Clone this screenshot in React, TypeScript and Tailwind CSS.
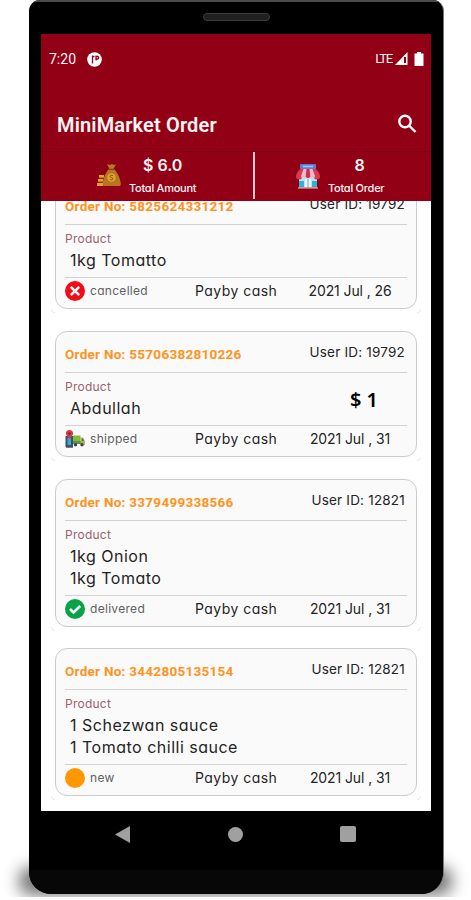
import type { ReactNode } from 'react';

type Status = 'cancelled' | 'shipped' | 'delivered' | 'new';

interface Order {
  orderNo: string;
  userId: string;
  products: string[];
  status: Status;
  date: string;
  price?: string;
}

const orders: Order[] = [
  { orderNo: '5825624331212', userId: '19792', products: ['1kg Tomatto'], status: 'cancelled', date: '2021 Jul , 26' },
  { orderNo: '55706382810226', userId: '19792', products: ['Abdullah'], status: 'shipped', date: '2021 Jul , 31', price: '$ 1' },
  { orderNo: '3379499338566', userId: '12821', products: ['1kg Onion', '1kg Tomato'], status: 'delivered', date: '2021 Jul , 31' },
  { orderNo: '3442805135154', userId: '12821', products: ['1 Schezwan sauce', '1 Tomato chilli sauce'], status: 'new', date: '2021 Jul , 31' },
];

function StatusIcon({ status }: { status: Status }) {
  if (status === 'shipped') {
    return (
      <svg className="w-5 h-5 shrink-0" viewBox="0 0 20 20">
        <rect x="0.5" y="7" width="7.5" height="11" fill="#35536d" />
        <rect x="2.5" y="9" width="3.5" height="7" fill="#43a5cf" />
        <path d="M1 18h7" stroke="#46505a" strokeWidth="1.5" />
        <path d="M4.5 1a3.6 3.6 0 0 1 3.6 3.6C8.1 7 4.5 10 4.5 10S.9 7 .9 4.6A3.6 3.6 0 0 1 4.5 1z" fill="#d93c45" />
        <circle cx="4.5" cy="4.5" r="1.2" fill="#5b3040" />
        <rect x="8" y="6.5" width="7.5" height="8.5" fill="#83b83f" />
        <path d="M8 12h8v3H8z" fill="#5c9345" />
        <path d="M15.5 8.5H18l1.8 3.5v4h-4.3z" fill="#a3b74b" />
        <path d="M17 9.5h1l1 2.5h-2z" fill="#496d83" />
        <path d="M17.5 13.5h2.3v2h-2.3z" fill="#e6a53b" />
        <circle cx="10.5" cy="15.7" r="1.7" fill="#3b4855" />
        <circle cx="17" cy="15.7" r="1.7" fill="#3b4855" />
      </svg>
    );
  }

  return (
    <svg className="w-5 h-5 shrink-0" viewBox="0 0 20 20" fill="none" stroke="#fff" strokeWidth="2.5">
      {status === 'cancelled' && (
        <>
          <circle cx="10" cy="10" r="10" fill="#f40b17" stroke="none" />
          <path d="M5.8 5.8l8.4 8.4M14.2 5.8l-8.4 8.4" />
        </>
      )}
      {status === 'delivered' && (
        <>
          <circle cx="10" cy="10" r="10" fill="#08a24b" stroke="none" />
          <path d="M5 10l3.5 3.5 6.7-6.5" />
        </>
      )}
      {status === 'new' && <circle cx="10" cy="10" r="10" fill="#ff9800" stroke="none" />}
    </svg>
  );
}

function MoneyBag() {
  return (
    <svg className="w-6 h-6" viewBox="0 0 24 24">
      <path d="M10 1l3 1 2-1 2 1 2-1-2.5 5h-4z" fill="#b9772b" />
      <path d="M12 6h5c3 3 6.5 9 6.8 15 .1 1.5-.8 2-2 2H7.5c-1.5 0-2-.8-1.8-2C6 15 9 9 12 6z" fill="#b87521" />
      <path d="M11.5 6.3h6" stroke="#7e4420" strokeWidth="1.3" />
      <circle cx="14.5" cy="14.5" r="4.3" fill="#dfa02d" />
      <path d="M16 12.7c-2-1-3.5 0-2.7 1.2.5.8 2.5.5 2.6 1.8 0 1.3-2 1.5-3.2.5" fill="none" stroke="#8f5518" />
      <path d="M2 12h5v3H2zM1 16h5v3H1zM0 20h6v3H0z" fill="#e5a030" />
      <path d="M2 15h5M1 19h5" stroke="#8f4c19" />
    </svg>
  );
}

function StoreIcon() {
  return (
    <svg className="h-[26px] w-6" viewBox="0 0 24 26">
      <rect x="3" y="11" width="18" height="14" fill="#b7e3f2" />
      <rect x="3" y="18" width="5" height="6" fill="#2eb2dc" />
      <rect x="16" y="18" width="5" height="6" fill="#2eb2dc" />
      <rect x="9" y="16" width="6" height="9" fill="#e9f8fc" />
      <path d="M12 16v9" stroke="#56a8cd" />
      <path d="M2 25h20" stroke="#df7a76" strokeWidth="1.5" />
      <path d="M4 6h16c2 2 4 5 4 7.5 0 2-2 3.5-4 3-1 0-2-1-2-2.5H6c0 1.5-1 2.5-2 2.5-2 .5-4-1-4-3C0 11 2 8 4 6z" fill="#da3851" />
      <path d="M7.5 6H11l-1 7c-.5 3-5 3-5 0zM13 6h3.5L19 13c0 3-4.5 3-5 0z" fill="#efb9c7" />
      <path d="M10.5 6h3l.7 7c0 2.7-4.4 2.7-4.4 0z" fill="#cf2f52" />
      <rect x="4" y="1" width="16" height="5" rx="1" fill="#5583dc" />
      <path d="M7 3.5h10" stroke="#a8c6f5" strokeWidth="1.5" />
    </svg>
  );
}

function Stat({ icon, value, label, valueClass }: { icon: ReactNode; value: string; label: string; valueClass?: string }) {
  return (
    <div className="flex pt-[3px] text-[#fff3f3]">
      <div className="w-8 pt-2">{icon}</div>
      <div className="flex flex-col items-center">
        <span className={`h-5 text-base leading-5 font-semibold whitespace-nowrap ${valueClass ?? ''}`}>{value}</span>
        <span className="mt-1 h-4 text-[11px] leading-[18px] font-medium tracking-[-0.25px] whitespace-nowrap">{label}</span>
      </div>
    </div>
  );
}

function OrderCard({ order }: { order: Order }) {
  return (
    <article className="relative shrink-0 rounded-xl border border-[#cccccc] bg-[#fafafa] px-[9px] text-[#242424]">
      <div className="flex h-[41px] justify-between border-b border-[#d2d2d2] pr-[2px]">
        <h2 className="pt-[12px] font-['Roboto',sans-serif] text-[13.5px] leading-5 font-bold tracking-[0.27px] whitespace-nowrap text-[#ff931e]">
          Order No: {order.orderNo}
        </h2>
        <span className="pt-[10px] text-[13.5px] leading-5 tracking-[0.2px] whitespace-nowrap">User ID: {order.userId}</span>
      </div>

      <div className="flex justify-between border-b border-[#d2d2d2] pt-[4px] pb-[6px]">
        <div>
          <p className="text-xs leading-5 tracking-[0.25px] text-[#a0606f]">Product</p>
          {order.products.map((product) => (
            <p key={product} className="pl-[5px] text-base leading-[22px] tracking-[0.5px] whitespace-nowrap">
              {product}
            </p>
          ))}
        </div>
        {order.price && (
          <span className="pt-[11px] pr-[29px] font-['Noto_Sans',sans-serif] text-xl leading-6 font-semibold text-black">{order.price}</span>
        )}
      </div>

      <div className="flex h-[30px] items-center pb-[4px]">
        <div className="flex w-[130px] items-center gap-[5px]">
          <StatusIcon status={order.status} />
          <span className="text-xs tracking-[0.3px] text-[#606060]">{order.status}</span>
        </div>
        <span className="w-[110px] text-sm tracking-[0.45px] whitespace-nowrap">Payby cash</span>
        <span className="w-[90px] text-center text-sm tracking-[-0.1px] whitespace-nowrap">{order.date}</span>
      </div>

      <i className="absolute -bottom-[5px] -left-[5px] size-1 rounded-bl-sm border-b border-l border-[#ececec]" />
      <i className="absolute -right-[5px] -bottom-[5px] size-1 rounded-br-sm border-r border-b border-[#ececec]" />
    </article>
  );
}

function Header() {
  return (
    <header className="relative z-10 h-[167px] shrink-0 bg-[#920016] text-[#fff3f3]">
      <div className="flex h-[50px] items-center pr-[7px] pl-2 font-['Roboto',sans-serif]">
        <span className="w-[38px] text-sm">7:20</span>
        <svg className="size-[15px]" viewBox="0 0 15 15">
          <circle cx="7.5" cy="7.5" r="7.3" fill="#fff" />
          <path d="M5.5 3.5v8M5 4.5h2.5M9 3.5v5M9 4.5h1.5c1.5 0 1.5 2.5 0 2.5H9" fill="none" stroke="#920016" strokeWidth="1.3" />
        </svg>
        <span className="ml-auto text-[13px] tracking-[-1.2px]">LTE</span>
        <svg className="ml-[3px] h-[14px] w-[13px]" viewBox="0 0 13 14">
          <path d="M0 13L12.5 0v13z" fill="#fff" />
          <path d="M10 5v6" stroke="#920016" strokeWidth="2" />
        </svg>
        <svg className="ml-[6px] h-[14px] w-[10px]" viewBox="0 0 10 14">
          <path d="M3 0h4v1.5h2.5V14H.5V1.5H3z" fill="#fff" />
        </svg>
      </div>

      <div className="flex h-[68px] items-center justify-between border-b border-[#81000f] pt-[14px] pr-[14px] pl-4">
        <h1 className="font-['Roboto',sans-serif] text-xl font-semibold tracking-[0.15px]">MiniMarket Order</h1>
        <svg className="-mt-[2px] size-[20px]" viewBox="0 0 20 20" fill="none" stroke="#fff" strokeWidth="2.4">
          <circle cx="8" cy="7.5" r="5.7" />
          <path d="M12 11.5l6.5 6.5" />
        </svg>
      </div>

      <div className="flex h-[49px]">
        <div className="w-[212px] pl-[56px]">
          <Stat icon={<MoneyBag />} value="$ 6.0" label="Total Amount" />
        </div>
        <div className="h-[47px] w-[2px] bg-[#eec9cd]" />
        <div className="pl-[41px]">
          <Stat icon={<StoreIcon />} value="8" label="Total Order" valueClass="pl-[7px]" />
        </div>
      </div>
    </header>
  );
}

export default function App() {
  return (
    <main className="h-[900px] w-[471px] overflow-hidden bg-white font-['Inter',sans-serif] [font-feature-settings:'cv11']">
      <div className="relative isolate ml-[29px] h-[894px] w-[415px]">
        {/* soft shadow the phone stands on */}
        <div className="absolute -right-[27px] -bottom-[3px] -left-[29px] -z-10 h-[60px] overflow-hidden">
          <div className="mx-[19px] mt-[30px] h-[28px] rounded-[12px] bg-black/55 blur-[8px]" />
        </div>
        <div className="h-full overflow-hidden rounded-t-[11px] rounded-b-[22px] border-r border-[#777] bg-black">
          <div className="flex h-[34px] justify-center border-t-2 border-[#4b4b4b] pt-[11px]">
            <div className="h-[8px] w-[67px] rounded-full border border-[#3b3b3b] bg-[#202020]" />
          </div>

          <div className="ml-3 flex h-[777px] w-[390px] flex-col overflow-hidden bg-white">
            <Header />
            <section className="-mt-[18px] flex flex-col gap-[21.8px] pr-[14px] pl-[14px]">
              {orders.map((order) => (
                <OrderCard key={order.orderNo} order={order} />
              ))}
            </section>
          </div>

          <nav className="flex h-[59px] items-start gap-[98px] pt-[15px] pl-[86px]">
            <svg className="h-[17px] w-[15px]" viewBox="0 0 15 17">
              <path d="M15 0v17L0 8.5z" fill="#a0a0a0" />
            </svg>
            <div className="mt-px size-[15px] rounded-full bg-[#a0a0a0]" />
            <div className="ml-[-1px] h-[16px] w-[16px] rounded-[2px] bg-[#a0a0a0]" />
          </nav>
          <div className="h-[24px] bg-[#070707]" />
        </div>
      </div>
    </main>
  );
}
